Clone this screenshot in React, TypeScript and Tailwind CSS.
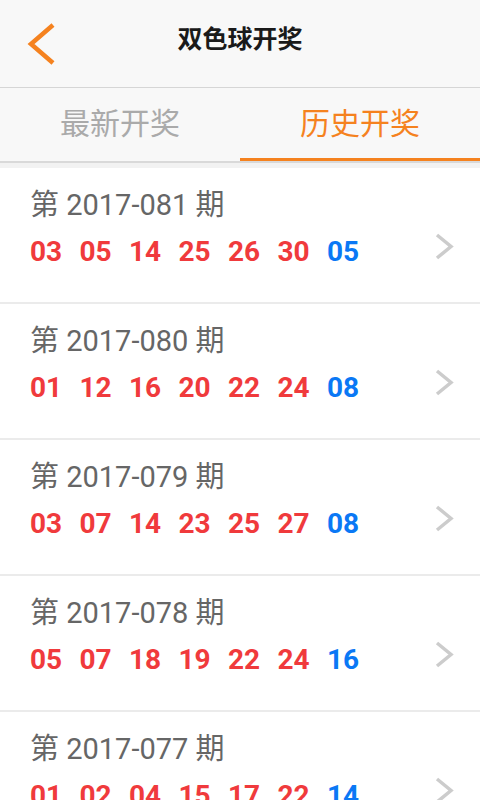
const FONT = { fontFamily: 'Roboto, "Noto Sans CJK SC", sans-serif' };

const draws = [
  { issue: '2017-081', reds: ['03', '05', '14', '25', '26', '30'], blue: '05' },
  { issue: '2017-080', reds: ['01', '12', '16', '20', '22', '24'], blue: '08' },
  { issue: '2017-079', reds: ['03', '07', '14', '23', '25', '27'], blue: '08' },
  { issue: '2017-078', reds: ['05', '07', '18', '19', '22', '24'], blue: '16' },
  { issue: '2017-077', reds: ['01', '02', '04', '15', '17', '22'], blue: '14' },
];

function DrawRow({ issue, reds, blue }: { issue: string; reds: string[]; blue: string }) {
  return (
    <div className="flex h-[136px] shrink-0 border-b-[2px] border-[#ebebeb] bg-white pl-[30px] pr-[26px]">
      <div className="flex-1 pt-[20px]">
        <div className="text-[29px] leading-[34px] text-[#666666]">第 {issue} 期</div>
        <div className="mt-[13px] flex text-[28px] font-bold leading-[34px]">
          {reds.map((n, i) => (
            <span key={i} className="w-[49.5px] text-[#f03a3c]">{n}</span>
          ))}
          <span className="text-[#0a78f5]">{blue}</span>
        </div>
      </div>
      <svg viewBox="0 0 20 30" className="mt-[63px] h-[30px] w-[20px] shrink-0">
        <polyline points="3,4 17,15.5 3,27" fill="none" stroke="#cccccc" strokeWidth="3.5" />
      </svg>
    </div>
  );
}

export default function App() {
  return (
    <div className="flex h-[800px] w-[480px] flex-col overflow-hidden bg-white" style={FONT}>
      <div className="relative flex h-[88px] shrink-0 items-start justify-center border-b border-[#d6d6d6] bg-[#f8f8f8]">
        <svg viewBox="0 0 32 46" className="absolute left-[26px] top-[21px] h-[46px] w-[32px]">
          <polyline points="27,4 5,23 27,42" fill="none" stroke="#f5821f" strokeWidth="4.5" />
        </svg>
        <h1 className="pt-[24px] text-[25px] font-bold leading-[32px] text-[#1a1a1a]">双色球开奖</h1>
      </div>
      <div className="flex h-[73px] shrink-0 bg-[#f8f8f8]">
        <div className="flex flex-1 items-center justify-center pb-[2px] text-[30px] text-[#aaaaaa]">最新开奖</div>
        <div className="flex flex-1 items-center justify-center border-b-[3px] border-[#f5821f] text-[30px] text-[#f5821f]">
          历史开奖
        </div>
      </div>
      <div className="h-[2px] shrink-0 bg-[#d9d9d9]" />
      <div className="h-[5px] shrink-0 bg-[#f2f2f2]" />
      {draws.map((d) => (
        <DrawRow key={d.issue} {...d} />
      ))}
    </div>
  );
}
